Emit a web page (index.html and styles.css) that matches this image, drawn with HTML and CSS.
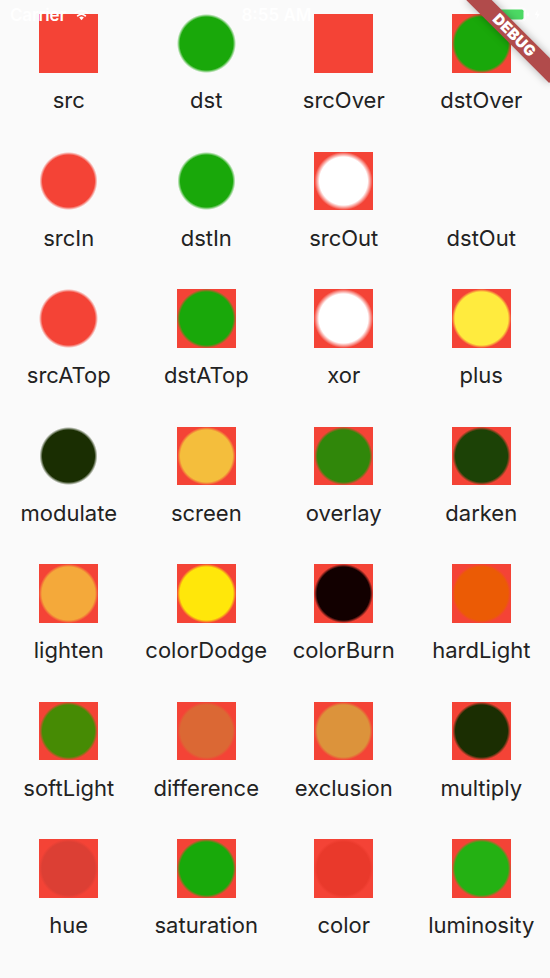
FILE: index.html
```html
<!DOCTYPE html>
<html lang="en">
<head>
<meta charset="utf-8">
<title>Blend modes</title>
<link rel="stylesheet" href="styles.css">
</head>
<body>
<main class="grid">
  <div class="cell"><div class="tile sq"></div><div class="label">src</div></div>
  <div class="cell"><div class="tile c-green"></div><div class="label">dst</div></div>
  <div class="cell"><div class="tile sq"></div><div class="label">srcOver</div></div>
  <div class="cell"><div class="tile sq c-green"></div><div class="label">dstOver</div></div>

  <div class="cell"><div class="tile c-red"></div><div class="label">srcIn</div></div>
  <div class="cell"><div class="tile c-green"></div><div class="label">dstIn</div></div>
  <div class="cell"><div class="tile sq c-hole"></div><div class="label">srcOut</div></div>
  <div class="cell"><div class="tile"></div><div class="label">dstOut</div></div>

  <div class="cell"><div class="tile c-red"></div><div class="label">srcATop</div></div>
  <div class="cell"><div class="tile sq c-green"></div><div class="label">dstATop</div></div>
  <div class="cell"><div class="tile sq c-hole"></div><div class="label">xor</div></div>
  <div class="cell"><div class="tile sq c-plus"></div><div class="label">plus</div></div>

  <div class="cell"><div class="tile c-modulate"></div><div class="label">modulate</div></div>
  <div class="cell"><div class="tile sq c-screen"></div><div class="label">screen</div></div>
  <div class="cell"><div class="tile sq c-overlay"></div><div class="label">overlay</div></div>
  <div class="cell"><div class="tile sq c-darken"></div><div class="label">darken</div></div>

  <div class="cell"><div class="tile sq c-lighten"></div><div class="label">lighten</div></div>
  <div class="cell"><div class="tile sq c-dodge"></div><div class="label">colorDodge</div></div>
  <div class="cell"><div class="tile sq c-burn"></div><div class="label">colorBurn</div></div>
  <div class="cell"><div class="tile sq c-hard"></div><div class="label">hardLight</div></div>

  <div class="cell"><div class="tile sq c-soft"></div><div class="label">softLight</div></div>
  <div class="cell"><div class="tile sq c-diff"></div><div class="label">difference</div></div>
  <div class="cell"><div class="tile sq c-excl"></div><div class="label">exclusion</div></div>
  <div class="cell"><div class="tile sq c-multiply"></div><div class="label">multiply</div></div>

  <div class="cell"><div class="tile sq c-hue"></div><div class="label">hue</div></div>
  <div class="cell"><div class="tile sq c-sat"></div><div class="label">saturation</div></div>
  <div class="cell"><div class="tile sq c-color"></div><div class="label">color</div></div>
  <div class="cell"><div class="tile sq c-lum"></div><div class="label">luminosity</div></div>
</main>

<header class="statusbar">
  <div class="sb-left">
    <span class="carrier">Carrier</span>
    <svg class="wifi" width="15" height="12" viewBox="0 0 15 12" aria-hidden="true">
      <path d="M7.5 11.2 L5.2 8.6 A3.4 3.4 0 0 1 9.8 8.6 Z" fill="#fff"/>
      <path d="M3.6 6.8 A5.8 5.8 0 0 1 11.4 6.8" fill="none" stroke="#fff" stroke-width="1.7" stroke-linecap="round"/>
      <path d="M1.3 4.2 A9 9 0 0 1 13.7 4.2" fill="none" stroke="#fff" stroke-width="1.7" stroke-linecap="round"/>
    </svg>
  </div>
  <div class="sb-time">8:55 AM</div>
  <div class="sb-right">
    <svg class="battery" width="52" height="29" viewBox="0 0 52 29" aria-hidden="true">
      <rect x="0.5" y="8" width="33" height="13" rx="3" fill="none" stroke="#fff" stroke-opacity="0.7"/>
      <rect x="35" y="12.5" width="2" height="4" rx="1" fill="#fff" fill-opacity="0.7"/>
      <rect x="2" y="9.6" width="29.5" height="9.8" rx="1.6" fill="#4cd964"/>
      <path d="M46 9.5 L42.6 15 L45.2 15 L44.2 19.5 L47.8 13.8 L45.2 13.8 Z" fill="#fff"/>
    </svg>
  </div>
</header>

<div class="banner-wrap"><div class="banner">DEBUG</div></div>
</body>
</html>
```

FILE: styles.css
```css
html, body {
  margin: 0;
  padding: 0;
}

body {
  width: 550px;
  height: 978px;
  background: #fafafa;
  overflow: hidden;
  position: relative;
  font-family: Inter, "Noto Sans", "Liberation Sans", sans-serif;
}

.grid {
  display: grid;
  grid-template-columns: repeat(4, 137.5px);
  grid-auto-rows: 137.5px;
}

.cell {
  display: flex;
  flex-direction: column;
  align-items: center;
  padding-top: 14px;
}

.tile {
  width: 58.67px;
  height: 58.67px;
  flex: none;
  background-color: var(--sq, transparent);
  background-image: radial-gradient(circle closest-side, var(--c, transparent) calc(100% - var(--blur, 3px)), rgba(255, 255, 255, 0) 100%);
}

.sq { --sq: #f44336; }

.c-green { --c: #19a80a; }
.c-red { --c: #f44336; }
.c-hole { --c: #ffffff; --blur: 5px; }
.c-plus { --c: #ffeb3e; }
.c-modulate { --c: #1a2e02; }
.c-screen { --c: #f4be3c; }
.c-overlay { --c: #30870a; }
.c-darken { --c: #1c4206; }
.c-lighten { --c: #f4a93a; }
.c-dodge { --c: #ffe70a; }
.c-burn { --c: #120000; }
.c-hard { --c: #eb5b05; }
.c-soft { --c: #468b04; }
.c-diff { --c: #db6834; }
.c-excl { --c: #dc933b; }
.c-multiply { --c: #1b2e02; }
.c-hue { --c: #dc3f34; }
.c-sat { --c: #18a90a; }
.c-color { --c: #e9392b; }
.c-lum { --c: #24b113; }

.label {
  margin-top: 13.8px;
  font-size: 22px;
  line-height: 28px;
  color: #222222;
  white-space: nowrap;
}

/* status bar */
.statusbar {
  position: absolute;
  top: 0;
  left: 0;
  right: 0;
  height: 29px;
  display: grid;
  grid-template-columns: 1fr auto 1fr;
  align-items: center;
  color: #ffffff;
  font-size: 17px;
  font-weight: 600;
}

.sb-left {
  display: flex;
  align-items: center;
  gap: 8px;
  padding-left: 10px;
}

.carrier {
  letter-spacing: -0.2px;
}

.wifi {
  display: block;
  margin-top: 1px;
}

.sb-time {
  padding-left: 3px;
}

.sb-right {
  display: flex;
  justify-content: flex-end;
  padding-right: 6px;
}

.battery {
  display: block;
}

/* debug banner */
.banner-wrap {
  position: absolute;
  top: 0;
  right: 0;
  width: 120px;
  height: 120px;
  overflow: hidden;
  pointer-events: none;
}

.banner {
  position: absolute;
  left: 61.33px;
  top: 41.07px;
  width: 117.34px;
  height: 17.6px;
  transform-origin: 58.67px -41.07px;
  transform: rotate(45deg);
  background: #b14b4b;
  box-shadow: 0 0 8px rgba(0, 0, 0, 0.3);
  color: #ffffff;
  font-family: Inter, "Liberation Sans", sans-serif;
  font-size: 15px;
  font-weight: 900;
  line-height: 17.6px;
  text-align: center;
  letter-spacing: 0.3px;
}
```
